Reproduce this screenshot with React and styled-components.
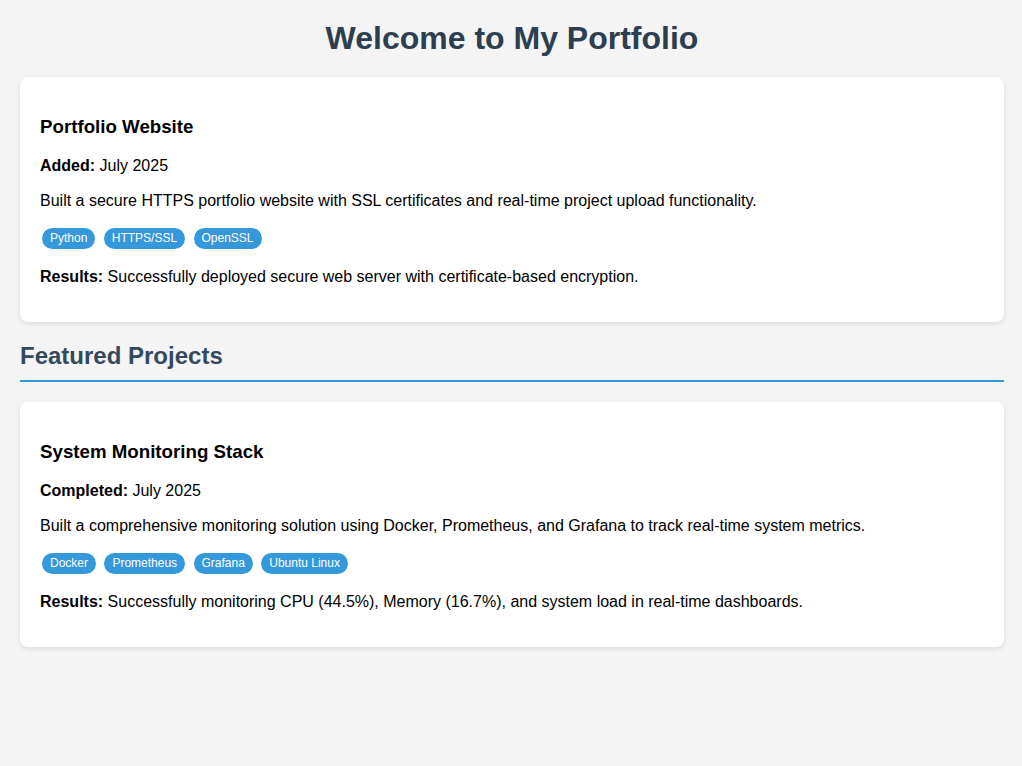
import React from "react";
import styled, { createGlobalStyle } from "styled-components";

const GlobalStyle = createGlobalStyle`
  body {
    margin: 0;
    background: #f4f4f4;
    font-family: "Liberation Sans", Arial, sans-serif;
    color: #000;
  }
`;

const Page = styled.div`
  padding: 20px 18px 20px 20px;
`;

const Title = styled.h1`
  margin: 0 0 20px;
  text-align: center;
  font-size: 32px;
  color: #2c3e50;
`;

const SectionTitle = styled.h2`
  margin: 20px 0;
  padding-bottom: 10px;
  font-size: 24px;
  line-height: 27.6px;
  color: #34495e;
  border-bottom: 2px solid #3498db;
`;

const Card = styled.div`
  background: #fff;
  border-radius: 8px;
  padding: 20px;
  margin-bottom: 20px;
  box-shadow: 0 2px 5px rgba(0, 0, 0, 0.1);
`;

const CardTitle = styled.h3`
  font-size: 18.72px;
  margin: 18.72px 0;
`;

const Text = styled.p`
  font-size: 16px;
  line-height: 19px;
  margin: 16px 0;
`;

const Tags = styled.div`
  display: flex;
  flex-wrap: wrap;
  gap: 4.4px;
  margin: 10px 0;
`;

const Tag = styled.span`
  display: inline-block;
  background: #3498db;
  color: #fff;
  font-size: 12px;
  line-height: 13px;
  padding: 4px 8px;
  margin: 2px;
  border-radius: 12px;
`;

const projects = [
  {
    title: "Portfolio Website",
    label: "Added:",
    date: "July 2025",
    desc: "Built a secure HTTPS portfolio website with SSL certificates and real-time project upload functionality.",
    tags: ["Python", "HTTPS/SSL", "OpenSSL"],
    results: "Successfully deployed secure web server with certificate-based encryption.",
  },
  {
    title: "System Monitoring Stack",
    label: "Completed:",
    date: "July 2025",
    desc: "Built a comprehensive monitoring solution using Docker, Prometheus, and Grafana to track real-time system metrics.",
    tags: ["Docker", "Prometheus", "Grafana", "Ubuntu Linux"],
    results: "Successfully monitoring CPU (44.5%), Memory (16.7%), and system load in real-time dashboards.",
  },
];

function ProjectCard({ project }) {
  return (
    <Card>
      <CardTitle>{project.title}</CardTitle>
      <Text>
        <strong>{project.label}</strong> {project.date}
      </Text>
      <Text>{project.desc}</Text>
      <Tags>
        {project.tags.map((t) => (
          <Tag key={t}>{t}</Tag>
        ))}
      </Tags>
      <Text>
        <strong>Results:</strong> {project.results}
      </Text>
    </Card>
  );
}

export default function App() {
  return (
    <Page>
      <GlobalStyle />
      <Title>Welcome to My Portfolio</Title>
      <ProjectCard project={projects[0]} />
      <SectionTitle>Featured Projects</SectionTitle>
      <ProjectCard project={projects[1]} />
    </Page>
  );
}
